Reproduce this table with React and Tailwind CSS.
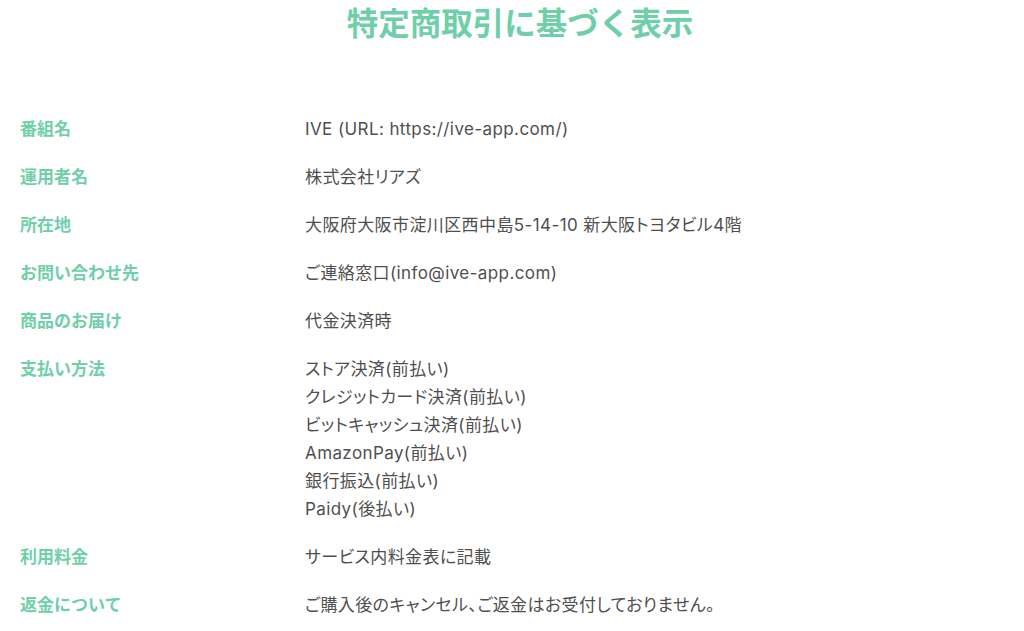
import React from 'react';

const rows = [
  { label: '番組名', value: ['IVE (URL: https://ive-app.com/)'] },
  { label: '運用者名', value: ['株式会社リアズ'] },
  { label: '所在地', value: ['大阪府大阪市淀川区西中島5-14-10 新大阪トヨタビル4階'] },
  { label: 'お問い合わせ先', value: ['ご連絡窓口(info@ive-app.com)'] },
  { label: '商品のお届け', value: ['代金決済時'] },
  {
    label: '支払い方法',
    value: [
      'ストア決済(前払い)',
      'クレジットカード決済(前払い)',
      'ビットキャッシュ決済(前払い)',
      'AmazonPay(前払い)',
      '銀行振込(前払い)',
      'Paidy(後払い)',
    ],
  },
  { label: '利用料金', value: ['サービス内料金表に記載'] },
  { label: '返金について', value: ['ご購入後のキャンセル、ご返金はお受付しておりません。'] },
];

const App = () => {
  return (
    <div className="min-h-screen bg-white font-['Inter','Noto_Sans_CJK_JP',sans-serif]">
      <h1 className="pt-[1px] pl-4 h-[115px] text-center text-[31.5px] leading-[46px] font-bold text-[#6fcfa8]">
        特定商取引に基づく表示
      </h1>

      <div className="flex flex-col gap-[20px] px-5">
        {rows.map((row) => (
          <div key={row.label} className="flex">
            <div className="w-[285px] shrink-0 text-[17px] leading-[28px] font-bold text-[#6fcfa8]">
              {row.label}
            </div>
            <div className="text-[17px] leading-[28px] tracking-[0.4px] text-[#4f4f4f] [font-feature-settings:'palt']">
              {row.value.map((line, i) => (
                <div key={i}>{line}</div>
              ))}
            </div>
          </div>
        ))}
      </div>
    </div>
  );
};

export default App;
